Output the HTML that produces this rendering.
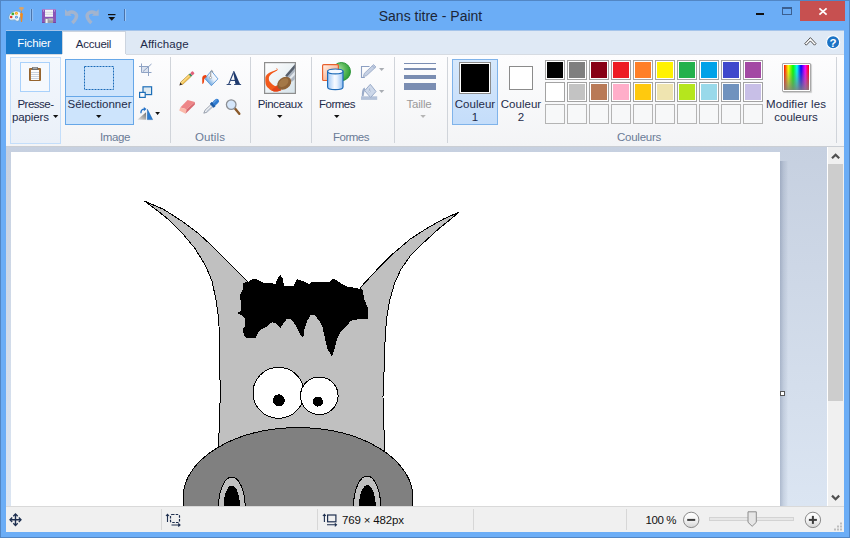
<!DOCTYPE html>
<html>
<head>
<meta charset="utf-8">
<title>Sans titre - Paint</title>
<style>
html,body{margin:0;padding:0;}
body{width:850px;height:538px;overflow:hidden;background:#6badf6;font-family:"Liberation Sans",sans-serif;font-size:12px;color:#1e2b4a;position:relative;}
.abs{position:absolute;}
#win{position:absolute;left:0;top:0;width:850px;height:538px;background:#6badf6;box-sizing:border-box;border:1px solid #5286c4;}
#title{position:absolute;left:330.5px;top:8px;width:200px;text-align:center;font-size:14px;line-height:16px;color:#1c2638;white-space:nowrap;}
#tabs{position:absolute;left:6px;top:31px;width:838px;height:23px;background:#dfe9f5;}
#ribbon{position:absolute;left:6px;top:54px;width:838px;height:92px;background:linear-gradient(#fdfdfe,#f3f4f6);border-bottom:1px solid #caced4;}
#work{position:absolute;left:6px;top:147px;width:821px;height:359px;background:linear-gradient(#c6d0e0,#dbe5f2);}
#status{position:absolute;left:6px;top:506px;width:838px;height:26px;background:#f0f0f0;border-top:1px solid #d9d9d9;box-sizing:border-box;}
.t{position:absolute;white-space:nowrap;text-align:center;line-height:13px;}
.sep{position:absolute;top:57px;width:1px;height:86px;background:#d0d4da;}
.gl{position:absolute;top:131px;color:#6a7b96;text-align:center;white-space:nowrap;line-height:13px;}
.r{font-size:11.5px;}
.sw{position:absolute;width:20px;height:20px;box-sizing:border-box;border:1px solid #a3a3a3;background:#fff;}
.sw i{position:absolute;left:1px;top:1px;width:16px;height:16px;display:block;}
.sw.e{background:#f7f8f9;border-color:#b4b4b4;}
</style>
</head>
<body>
<div id="win"></div>
<div id="title">Sans titre - Paint</div>
<div id="tabs"></div><div class="abs" style="left:6px;top:30px;width:838px;height:1px;background:#a5c4ea"></div>
<!-- title bar icons -->
<svg class="abs" style="left:8px;top:6px" width="120" height="20" viewBox="0 0 120 20">
  <!-- paint app icon -->
  <path d="M0.800 11.500 C0.800 7.500 4.500 4.900 8.300 4.900 C11.500 4.900 13.200 6.500 13.200 8.500 C13.200 10 12.300 10.500 11.800 11.500 C11 13 12 14.800 10 15.300 C8.200 15.700 8 14 6.500 13.900 C4.500 13.800 0.800 15.500 0.800 11.500 Z" fill="#eef4f9" stroke="#6b9fcb" stroke-width="0.900"/>
  <circle cx="4.800" cy="7.900" r="1.400" fill="#3aa935"/>
  <circle cx="8.400" cy="7.300" r="1.500" fill="#f2a31c"/><circle cx="8.400" cy="7.300" r="0.600" fill="#fbd66a"/>
  <circle cx="3.200" cy="11" r="1.300" fill="#e0392c"/>
  <circle cx="8.400" cy="11.200" r="1.400" fill="#4f8fd6"/><circle cx="8.400" cy="11.200" r="0.600" fill="#b7d4f2"/>
  <path d="M12.100 8.600 Q12.200 6.600 13.500 6.400 Q14.800 6.600 14.900 8.600 L14 15.900 L13 15.900 Z" fill="#f28a1c"/>
  <path d="M13.500 4.400 L13.500 6.800" stroke="#9c8f86" stroke-width="0.900"/><path d="M11 2 Q11.200 1.100 13.500 1.100 Q15.800 1.100 16 2 Q15.800 3.200 14.300 3.700 L13.800 4.900 L13.200 4.900 L12.700 3.700 Q11.200 3.200 11 2 Z" fill="#e0a462"/>
  <!-- separator -->
  <rect x="22.400" y="3" width="0.800" height="12" fill="#a9cdf8" opacity="0.700"/>
  <rect x="23.200" y="3" width="1" height="12" fill="#3a5a8a" opacity="0.850"/>
  <rect x="24.200" y="3" width="0.900" height="12" fill="#a9cdf8" opacity="0.800"/>
  <!-- save icon -->
  <rect x="34" y="3" width="14" height="14" fill="#8a55b8"/>
  <rect x="34" y="3" width="14" height="1" fill="#a77bd0"/>
  <rect x="34" y="16" width="14" height="1" fill="#7445a3"/>
  <rect x="37" y="3.800" width="8" height="7" fill="#f6f6f8"/>
  <rect x="37" y="5.800" width="8" height="1" fill="#d5d7de"/>
  <rect x="37" y="7.800" width="8" height="1" fill="#d5d7de"/>
  <rect x="36.800" y="12.400" width="8.300" height="4.600" fill="#9a9aa2"/>
  <rect x="37.700" y="13" width="1.900" height="4" fill="#efeff2"/>
  <rect x="40.500" y="12.400" width="4.600" height="2" fill="#b9b9c0"/>
  <rect x="35" y="4.400" width="1" height="1" fill="#d8c4ea"/><rect x="46" y="4.400" width="1" height="1" fill="#d8c4ea"/>
  <!-- undo -->
  <path d="M57 3.200 L57 9.800 L63.800 9.800 Z" fill="#a3b4ce"/>
  <path d="M60.300 7 C65 4.300 70.200 7.600 68 12.200 C67.200 13.900 66 15.300 64.300 16.900" fill="none" stroke="#a3b4ce" stroke-width="3.400"/>
  <!-- redo -->
  <path d="M90.700 3.200 L90.700 9.800 L83.900 9.800 Z" fill="#a3b4ce"/>
  <path d="M87.400 7 C82.700 4.300 77.500 7.600 79.700 12.200 C80.500 13.900 81.700 15.300 83.400 16.900" fill="none" stroke="#a3b4ce" stroke-width="3.400"/>
  <!-- customize arrow -->
  <rect x="100" y="8" width="7.500" height="1.200" fill="#111"/>
  <path d="M100.300 11 L107.200 11 L103.750 14.800 Z" fill="#111"/>
  <!-- separator -->
  <rect x="116" y="3" width="1" height="12" fill="#3f5f8f" opacity="0.75"/>
  <rect x="117" y="3" width="1" height="12" fill="#a9cdf8" opacity="0.8"/>
</svg>
<!-- window buttons -->
<div class="abs" style="left:756px;top:13px;width:8px;height:2px;background:#111"></div>
<div class="abs" style="left:782px;top:7px;width:10px;height:8px;box-sizing:border-box;border:1px solid #3b5f90;border-top-width:2px;"></div>
<div class="abs" style="left:800px;top:1px;width:45px;height:20px;background:#c75050"></div>
<svg class="abs" style="left:817px;top:6px" width="12" height="11" viewBox="0 0 12 11"><path d="M2.400 2.300 L9.600 8.700 M9.600 2.300 L2.400 8.700" stroke="#fff" stroke-width="1.700" fill="none"/></svg>

<div class="abs" style="left:6px;top:31px;width:56px;height:23px;background:#1979ca"></div>
<div class="t r" style="left:6px;top:37px;width:56px;color:#fff;letter-spacing:-0.15px">Fichier</div>
<div class="abs" style="left:62px;top:31px;width:64px;height:24px;background:#fdfdfe;border:1px solid #ccd4df;border-bottom:none;box-sizing:border-box"></div>
<div class="t r" style="left:62px;top:38px;width:63px;color:#1e2b4a;letter-spacing:-0.25px">Accueil</div>
<div class="t r" style="left:133px;top:38px;width:63px;color:#1e2b4a;letter-spacing:0.1px">Affichage</div>
<svg class="abs" style="left:803px;top:35px" width="40" height="16" viewBox="0 0 40 16">
  <path d="M1.800 8.600 L7.400 2.600 L13 8.600 L11.500 10.200 L7.400 5.900 L3.300 10.200 Z" fill="#fff" stroke="#4f4f4f" stroke-width="1"/>
  <circle cx="30.100" cy="7.200" r="6.600" fill="#1b73c5" stroke="#fff" stroke-width="1.200"/>
  <text x="30.100" y="11.500" font-family="Liberation Sans" font-weight="bold" font-size="11.500" fill="#fff" text-anchor="middle">?</text>
</svg>

<div id="ribbon"></div><div class="abs" style="left:6px;top:54px;width:56px;height:1px;background:#d6dbe2"></div><div class="abs" style="left:126px;top:54px;width:718px;height:1px;background:#d6dbe2"></div>

<!-- group: presse-papiers -->
<div class="abs" style="left:10px;top:57px;width:51px;height:87px;box-sizing:border-box;border:1px solid #c4defa;background:linear-gradient(#f3f7fd,#eaf0f8)"></div>
<div class="abs" style="left:20px;top:62px;width:30px;height:30px;box-sizing:border-box;border:1px solid #a9d1fb;background:#f6f9fd"></div>
<!-- select button -->
<div class="abs" style="left:65px;top:59px;width:69px;height:66px;box-sizing:border-box;border:1px solid #66a7e8;background:#cde4fc"></div>
<div class="abs" style="left:66px;top:96px;width:67px;height:1px;background:#66a7e8"></div>
<!-- separators -->
<div class="sep" style="left:170px"></div><div class="sep" style="left:250px"></div><div class="sep" style="left:311px"></div><div class="sep" style="left:394px"></div><div class="sep" style="left:447px"></div><div class="sep" style="left:836px"></div>
<!-- couleur 1 active -->
<div class="abs" style="left:452px;top:59px;width:46px;height:66px;box-sizing:border-box;border:1px solid #7fb3ea;background:linear-gradient(#d6e8fc,#c4ddfa)"></div>
<div class="abs" style="left:459px;top:62px;width:32px;height:32px;box-sizing:border-box;border:1px solid #8b8b8b;background:#fff"><div style="position:absolute;left:1px;top:1px;width:28px;height:28px;background:#000"></div></div>
<div class="abs" style="left:509px;top:66px;width:24px;height:24px;box-sizing:border-box;border:1px solid #8b8b8b;background:#fff"></div>
<div class="sw" style="left:545px;top:60px"><i style="background:#000000"></i></div><div class="sw" style="left:567px;top:60px"><i style="background:#7f7f7f"></i></div><div class="sw" style="left:589px;top:60px"><i style="background:#880015"></i></div><div class="sw" style="left:611px;top:60px"><i style="background:#ed1c24"></i></div><div class="sw" style="left:633px;top:60px"><i style="background:#ff7f27"></i></div><div class="sw" style="left:655px;top:60px"><i style="background:#fff200"></i></div><div class="sw" style="left:677px;top:60px"><i style="background:#22b14c"></i></div><div class="sw" style="left:699px;top:60px"><i style="background:#00a2e8"></i></div><div class="sw" style="left:721px;top:60px"><i style="background:#3f48cc"></i></div><div class="sw" style="left:743px;top:60px"><i style="background:#a349a4"></i></div><div class="sw" style="left:545px;top:82px"><i style="background:#ffffff"></i></div><div class="sw" style="left:567px;top:82px"><i style="background:#c3c3c3"></i></div><div class="sw" style="left:589px;top:82px"><i style="background:#b97a57"></i></div><div class="sw" style="left:611px;top:82px"><i style="background:#ffaec9"></i></div><div class="sw" style="left:633px;top:82px"><i style="background:#ffc90e"></i></div><div class="sw" style="left:655px;top:82px"><i style="background:#efe4b0"></i></div><div class="sw" style="left:677px;top:82px"><i style="background:#b5e61d"></i></div><div class="sw" style="left:699px;top:82px"><i style="background:#99d9ea"></i></div><div class="sw" style="left:721px;top:82px"><i style="background:#7092be"></i></div><div class="sw" style="left:743px;top:82px"><i style="background:#c8bfe7"></i></div><div class="sw e" style="left:545px;top:104px"></div><div class="sw e" style="left:567px;top:104px"></div><div class="sw e" style="left:589px;top:104px"></div><div class="sw e" style="left:611px;top:104px"></div><div class="sw e" style="left:633px;top:104px"></div><div class="sw e" style="left:655px;top:104px"></div><div class="sw e" style="left:677px;top:104px"></div><div class="sw e" style="left:699px;top:104px"></div><div class="sw e" style="left:721px;top:104px"></div><div class="sw e" style="left:743px;top:104px"></div>
<!-- edit colors icon -->
<div class="abs" style="left:782px;top:63px;width:29px;height:29px;box-sizing:border-box;border:1px solid #a8a8a8;border-radius:1px;background:#fff;box-shadow:1px 1px 1px rgba(0,0,0,0.18)">
  <div style="position:absolute;left:1px;top:1px;width:25px;height:25px;background:linear-gradient(rgba(128,128,128,0),rgba(128,128,128,0.12) 25%,rgba(128,128,128,0.85)),linear-gradient(90deg,#ff0000,#ffff00 17%,#00ff00 36%,#00ffff 52%,#0000ff 68%,#ff00ff 85%,#ff0000)"></div>
</div>
<!-- ribbon text -->
<div class="t r" style="left:10px;top:98px;width:51px;letter-spacing:-0.5px">Presse-</div>
<div class="t r" style="left:5px;top:111px;width:51px;letter-spacing:-0.1px">papiers</div>
<div class="t r" style="left:65px;top:98px;width:69px">Sélectionner</div>
<div class="t r" style="left:252px;top:98px;width:56px;letter-spacing:-0.34px">Pinceaux</div>
<div class="t r" style="left:312px;top:98px;width:50px;letter-spacing:-0.47px">Formes</div>
<div class="t r" style="left:395px;top:98px;width:48px;color:#9a9a9a;letter-spacing:-0.17px">Taille</div>
<div class="t r" style="left:452px;top:98px;width:46px;letter-spacing:0.03px">Couleur</div>
<div class="t r" style="left:452px;top:111px;width:46px">1</div>
<div class="t r" style="left:498px;top:98px;width:46px;letter-spacing:0.03px">Couleur</div>
<div class="t r" style="left:498px;top:111px;width:46px">2</div>
<div class="t r" style="left:761px;top:98px;width:70px;letter-spacing:0.1px">Modifier les</div>
<div class="t r" style="left:761px;top:111px;width:70px">couleurs</div>
<div class="gl r" style="left:85px;width:60px;letter-spacing:-0.4px">Image</div>
<div class="gl r" style="left:180px;width:60px;letter-spacing:0.1px">Outils</div>
<div class="gl r" style="left:321px;width:60px;letter-spacing:-0.47px">Formes</div>
<div class="gl r" style="left:609px;width:60px;letter-spacing:-0.25px">Couleurs</div>
<!-- ribbon icons -->
<svg class="abs" style="left:6px;top:54px" width="838" height="92" viewBox="6 54 838 92">
  <defs>
    <linearGradient id="gcyl" x1="0" x2="1"><stop offset="0" stop-color="#9cc6f6"/><stop offset="0.450" stop-color="#f6faff"/><stop offset="0.600" stop-color="#eaf3fe"/><stop offset="1" stop-color="#8fbdf2"/></linearGradient>
    <linearGradient id="gor" x1="0" y1="0" x2="1" y2="1"><stop offset="0" stop-color="#fff3ec"/><stop offset="0.500" stop-color="#fac3a8"/><stop offset="1" stop-color="#f08a5c"/></linearGradient>
    <radialGradient id="ggr" cx="0.300" cy="0.400" r="0.750"><stop offset="0" stop-color="#b5e3b0"/><stop offset="0.550" stop-color="#5cba5c"/><stop offset="1" stop-color="#259a30"/></radialGradient>
    <linearGradient id="gbk" x1="0.850" y1="0.250" x2="0.250" y2="0.850"><stop offset="0" stop-color="#ffffff"/><stop offset="0.450" stop-color="#e6f0fb"/><stop offset="1" stop-color="#5c9cdc"/></linearGradient>
    <linearGradient id="gtri" x1="0" y1="1" x2="1" y2="0"><stop offset="0" stop-color="#e8e8e8"/><stop offset="1" stop-color="#707070"/></linearGradient>
    <linearGradient id="gbr" x1="0" y1="0" x2="1" y2="1"><stop offset="0" stop-color="#ffffff"/><stop offset="0.45" stop-color="#eef3f6"/><stop offset="1" stop-color="#d6e3ea"/></linearGradient>
  </defs>
  <!-- clipboard -->
  <rect x="29" y="68" width="12" height="13" rx="1" fill="#a9743a"/>
  <rect x="29.500" y="68.5" width="11" height="12" rx="1" fill="none" stroke="#8a5a24" stroke-width="1" opacity="0.6"/>
  <rect x="31" y="70" width="8" height="10" fill="#fdfdfd"/>
  <rect x="31" y="72" width="8" height="1" fill="#c9d3e0"/><rect x="31" y="74" width="8" height="1" fill="#c9d3e0"/><rect x="31" y="76" width="8" height="1" fill="#c9d3e0"/><rect x="31" y="78" width="8" height="1" fill="#c9d3e0"/>
  <rect x="32" y="67" width="6" height="3" rx="0.5" fill="#6f6f6f"/><rect x="33" y="67.600" width="4" height="1" fill="#c9c9c9"/>
  <path d="M53 115 L58.300 115 L55.650 118 Z" fill="#111"/>
  <!-- select dashed rect -->
  <rect x="84.500" y="66.5" width="29" height="23" fill="none" stroke="#1a6bb8" stroke-width="1" stroke-dasharray="2 1"/>
  <path d="M96 115 L101.500 115 L98.75 118 Z" fill="#111"/>
  <!-- crop (disabled) -->
  <rect x="142" y="67" width="6" height="5.500" fill="#d3dceb" opacity="0.8"/>
  <g stroke="#8fa3c4" stroke-width="1" fill="none"><path d="M141.500 63.500 L141.500 72.500 L151.500 72.500 M139 66.500 L148.500 66.500 L148.500 76"/><path d="M143 71.500 L151.500 64"/></g>
  <!-- resize -->
  <rect x="143" y="86.800" width="8.600" height="7.800" fill="#dfeaf1" stroke="#1e6fb8" stroke-width="1.200"/>
  <rect x="139.600" y="92.400" width="5.600" height="5" fill="#fafcfe" stroke="#1e6fb8" stroke-width="1.200"/>
  <!-- rotate -->
  <path d="M137.300 119.800 L146 119.800 L146 112.300 Z" fill="url(#gtri)"/>
  <path d="M147.400 109.300 L147.300 119.600 L152.600 119.600 Z" fill="#2a7bd0" stroke="#1b62ad" stroke-width="0.500"/>
  <path d="M140.900 113.200 C140.900 110.600 142.500 109.200 144.300 109.200" stroke="#2472c8" stroke-width="1.300" fill="none"/>
  <path d="M143.800 107 L146.500 109.100 L143.800 111.200 Z" fill="#2472c8"/>
  <path d="M155.200 112 L160 112 L157.600 115 Z" fill="#111"/>
  <!-- pencil -->
  <g transform="translate(179.300 85.500) rotate(-43)">
    <path d="M0 0 L3 -1.500 L3 1.500 Z" fill="#3a2a1a"/>
    <rect x="3" y="-1.500" width="11.500" height="3" fill="#f4c453" stroke="#b07f22" stroke-width="0.500"/>
    <rect x="3" y="-0.900" width="11.500" height="0.900" fill="#fbe29a"/>
    <rect x="14.500" y="-1.600" width="1.800" height="3.200" fill="#3a8f5f"/>
    <rect x="16.300" y="-1.600" width="3.200" height="3.200" rx="0.800" fill="#e2607a"/>
  </g>
  <!-- bucket -->
  <path d="M211.400 70.900 L217.900 78.900 L211.400 85.700 L204.800 78.500 Z" fill="url(#gbk)" stroke="#5a96d6" stroke-width="0.900"/>
  <path d="M206.200 74.900 C204 74.700 202.300 76 202.200 78 L202.300 83.900 C203.200 83.800 203.900 83 204 81.500 L204.200 79.600 C204.500 78.200 205.300 77.600 206.600 77.300 Z" fill="#ee4310"/>
  <path d="M210.600 77 L210.900 71 Q211.700 69.600 212.600 71 L212.700 72.500" stroke="#8f8f8f" stroke-width="0.900" fill="none"/><circle cx="210.500" cy="77.600" r="1.100" fill="#fff" stroke="#8a8a8a" stroke-width="0.600"/>
  <!-- A -->
  <g fill="#1f3a6e"><path d="M233 71.200 L234.300 71.200 L240.100 84.200 L235.500 84.200 Z"/><path d="M232.900 72.600 L233.700 73.600 L229.200 84.200 L228.100 84.200 Z"/><rect x="230.600" y="79.900" width="5.400" height="1"/><rect x="226.600" y="84" width="4.500" height="0.900"/><rect x="234.100" y="84" width="7" height="0.900"/></g>
  <!-- eraser -->
  <path d="M187.600 100 L194.900 102 L186.700 109.300 L180.300 107.500 Z" fill="#ee8688"/>
  <path d="M180.300 107.500 L186.700 109.300 L185.500 113.700 L179.200 110.600 Z" fill="#fbb9aa"/>
  <path d="M186.700 109.300 L194.900 102 L194.900 104.400 L185.500 113.700 Z" fill="#d9686f"/>
  <!-- dropper -->
  <g transform="translate(203.800 113.200) rotate(-43)">
    <path d="M0 0 L3 -1.400 L12 -1.400 L12 1.400 L3 1.400 Z" fill="#f1f3f6" stroke="#7d8797" stroke-width="0.700"/>
    <path d="M3 0.300 L12 0.300 L12 1.400 L3 1.400 Z" fill="#b9c2d0"/>
    <rect x="10.800" y="-2.800" width="3" height="5.600" rx="0.500" fill="#1d5ca6"/>
    <rect x="13" y="-2.300" width="7" height="4.600" rx="2.300" fill="#2f7bd0"/>
    <rect x="14" y="-1.700" width="5" height="1.300" rx="0.600" fill="#5d9be0"/>
  </g>
  <!-- magnifier -->
  <path d="M235 108.500 L239.300 113.800" stroke="#8b5a2b" stroke-width="2.400" stroke-linecap="round"/>
  <circle cx="231.200" cy="104.600" r="4.800" fill="#d5e6fa" stroke="#8c8f94" stroke-width="1.300"/>
  <!-- brushes -->
  <rect x="264.600" y="62.600" width="30.800" height="30.800" fill="url(#gbr)" stroke="#8e8e8e" stroke-width="1.200"/>
  <clipPath id="cpb"><rect x="265.200" y="63.200" width="29.600" height="29.600"/></clipPath>
  <g clip-path="url(#cpb)">
    <path d="M276 68.300 C277.500 68.300 278 69.500 277.500 69.900 C276.800 69.500 275.500 70.300 274.900 70.600 C272 71.500 269.500 72.500 268.200 73.600 C266 75.500 265 77 265.200 78.800 C265.100 81 265.300 82.500 265.600 84 C266.300 86 267.500 87.500 268.900 88.500 C270 89.800 271.300 90.600 272.600 91.100 C274 91.600 275.600 91.700 277.100 91.500 C278.600 91.300 280 91 281.200 90.300 L278.500 84.800 C277.500 85.800 276 86.100 274.900 85.900 C273.400 85.300 272.100 84.400 271.200 83.300 C270 82.200 269 81 268.900 79.600 C268.700 78.200 269 76.800 269.700 75.800 C270.600 74.500 272 73.400 273.400 72.500 C275 71.600 277 70.800 277.500 69.900 Z" fill="#f25a1c"/>
    <path d="M272.600 91.100 C274 91.600 275.600 91.700 277.100 91.500 C278.600 91.300 280 91 281.200 90.300 L278.500 84.800 C276.800 86.500 274 88 272 89.500 Z" fill="#e2441a"/>
    <path d="M285.300 75.500 L297 62 L300 74 L292 81.800 Z" fill="#aab3bf"/>
    <path d="M285.300 75.500 L297 62 L298 64.500 L287 77 Z" fill="#565f6c"/>
    <path d="M288.500 78.500 L298.500 67.500 L299.500 70 L290 80 Z" fill="#e3e8ee"/>
    <ellipse cx="284.200" cy="83.300" rx="7.600" ry="5.800" transform="rotate(-38 284.200 83.300)" fill="#8e6236"/>
    <ellipse cx="283.600" cy="82.600" rx="5.500" ry="3.600" transform="rotate(-38 283.600 82.600)" fill="#a47846"/>
  </g>
  <path d="M277 115 L282.500 115 L279.750 118 Z" fill="#111"/>
  <!-- shapes -->
  <circle cx="341.400" cy="71.600" r="9.100" fill="url(#ggr)" stroke="#1e8f2a" stroke-width="0.900"/>
  <rect x="322.600" y="64.700" width="15.800" height="15.800" rx="1" fill="url(#gor)" stroke="#e8602c" stroke-width="1.200"/>
  <path d="M327.600 71.400 L327.600 86.900 A7.700 2.700 0 0 0 343 86.900 L343 71.400 Z" fill="url(#gcyl)" stroke="#1e6bb8" stroke-width="1.200"/>
  <ellipse cx="335.300" cy="71.400" rx="7.700" ry="2.400" fill="#f4f9ff" stroke="#1e6bb8" stroke-width="1.200"/>
  <path d="M334 115 L339.500 115 L336.750 118 Z" fill="#111"/>
  <!-- outline (disabled) -->
  <path d="M369.500 66.500 L361.500 66.500 L361.500 77.500 L364.800 77.500" stroke="#8c9fc2" stroke-width="1.100" fill="none"/>
  <path d="M363.300 76.600 L364.300 73.400 L373.600 64.600 L375.900 67 L366.500 75.700 Z" fill="#c5d0e4" stroke="#93a5c4" stroke-width="0.800"/>
  <path d="M372.300 65.800 L374.700 68.200" stroke="#93a5c4" stroke-width="0.800"/>
  <path d="M379 68 L384.300 68 L381.650 70.900 Z" fill="#a9adb3"/>
  <!-- fill (disabled) -->
  <rect x="361" y="96.300" width="16.200" height="3.600" fill="#b4c2d9"/>
  <path d="M370.300 84.300 L376 91.500 L370.600 97.500 L364.700 90.700 Z" fill="#cdd8ea" stroke="#9bacc9" stroke-width="1"/>
  <path d="M364.600 87.600 C362.500 88.500 361.800 91 361.900 96.300 L363.600 96.300 L364.300 92 L365.300 89.800 Z" fill="#9bacc9"/>
  <path d="M369.600 88.500 L369.600 91" stroke="#9bacc9" stroke-width="0.800"/><circle cx="369.600" cy="91.300" r="0.900" fill="#eef2f8" stroke="#9bacc9" stroke-width="0.500"/>
  <path d="M379 90.100 L384.300 90.100 L381.650 93 Z" fill="#a9adb3"/>
  <!-- size -->
  <rect x="404" y="63" width="32" height="1" fill="#7a8db2"/><rect x="404" y="68" width="32" height="2" fill="#7a8db2"/><rect x="404" y="75" width="32" height="4" fill="#7a8db2"/><rect x="404" y="83" width="32" height="7" fill="#7a8db2"/>
  <path d="M420.300 115 L425.800 115 L423.050 118 Z" fill="#b5b5b5"/>
</svg>
<div id="work"></div>
<div id="status"></div>
<!-- canvas shadow -->
<div class="abs" style="left:780px;top:161px;width:8px;height:345px;background:linear-gradient(90deg,rgba(40,60,100,0.250),rgba(40,60,100,0.110) 45%,rgba(40,60,100,0.040) 85%,rgba(40,60,100,0))"></div>
<!-- canvas -->
<div id="canvas" class="abs" style="left:11px;top:152px;width:769px;height:354px;background:#fff;overflow:hidden">
<svg class="abs" style="left:0;top:0" width="769" height="354" viewBox="11 152 769 354" shape-rendering="crispEdges">
  <path d="M144.5 201 L163.8 209.5 L182 221.2 L197.7 232.9 L210.7 244.6 L226.3 260.3 L239.3 273.3 L247.5 281.5 L250 300 L358 300 L360.5 287.5 L376.4 270.3 L392 254.6 L410.3 239 L428.5 227.3 L444.1 218.7 L459.2 212 L451.9 218.2 L438.9 228.6 L423.3 242.9 L410.3 255.9 L401.1 269 L394.6 283.3 L389.4 301.5 L386.8 317.1 L385.2 335 L384.5 360 L383 397 L384 430 L384.9 452 L385 470 L218 470 L218.5 447 L219.5 420 L220.2 397 L219.8 360 L219.5 335 L218.5 317.5 L215.9 299.3 L212 281.1 L205.5 265.5 L195 248.5 L182 232.9 L169 219.9 L156 209.5 Z" fill="#c0c0c0" stroke="#000" stroke-width="1"/>
  <path d="M247.7 282.1 L252.3 279.1 L257 279.5 L264.4 283.2 L275.5 283.6 L278.7 276.5 L280.6 275.2 L282.6 278.4 L284.3 286.4 L293.2 286.4 L297.3 279.1 L303.4 281.4 L309.6 284 L311.8 281.7 L330.4 281.7 L331.9 278.9 L335 279.5 L346.2 286.4 L360.1 288.8 L362.9 290.1 L364.2 299.4 L367.9 307.8 L367.9 318.5 L358.3 319.3 L350.8 320.8 L346.2 326.3 L340.6 331.9 L336.9 339.4 L334.1 350.5 L331.9 356.1 L327.6 349.6 L324.8 337.5 L322.6 327.3 L319.2 320.8 L314.6 314.8 L310.9 314.8 L307.2 320.8 L304.4 329.1 L303.4 337.5 L300.6 334.7 L295.1 324.5 L290.4 318.5 L286.7 318.9 L280.6 327.7 L275.5 323 L271.8 322.3 L267.2 326.3 L261.6 329.1 L257.9 332.9 L256 337.5 L246.7 337.9 L243.9 335.6 L243 329.1 L245.2 325.4 L245.2 318 L241.2 315.2 L237.4 313 L241.2 310.5 L240.2 294.7 L243 289.2 L243.4 282.7 Z" fill="#000"/>
  <ellipse cx="298" cy="497.7" rx="115" ry="70" fill="#808080" stroke="#000" stroke-width="1"/>
  <circle cx="278.500" cy="392.8" r="25.5" fill="#fff" stroke="#000" stroke-width="1"/>
  <circle cx="319.3" cy="395.8" r="18.8" fill="#fff" stroke="#000" stroke-width="1"/>
  <circle cx="278.8" cy="400.3" r="6" fill="#000"/>
  <circle cx="317.9" cy="401.6" r="5" fill="#000"/>
  <ellipse cx="231.8" cy="508" rx="13.4" ry="31" fill="#c0c0c0" stroke="#000" stroke-width="1"/>
  <ellipse cx="231.8" cy="508" rx="8.3" ry="22.500" fill="#000"/>
  <ellipse cx="367.100" cy="508" rx="13.7" ry="32" fill="#c0c0c0" stroke="#000" stroke-width="1"/>
  <ellipse cx="367.3" cy="508" rx="8.5" ry="23" fill="#000"/>
</svg>
</div>
<!-- resize handle -->
<div class="abs" style="left:780px;top:391px;width:5px;height:5px;box-sizing:border-box;border:1px solid #555;background:#fff"></div>
<!-- scrollbar -->
<div class="abs" style="left:827px;top:147px;width:17px;height:359px;background:#f0f0f0;border-left:1px solid #fff;box-sizing:border-box"></div>
<div class="abs" style="left:828px;top:164px;width:15px;height:237px;background:#cdcdcd"></div>
<svg class="abs" style="left:827px;top:147px" width="17" height="360" viewBox="0 0 17 360">
  <path d="M5 11.300 L8.600 7.700 L12.200 11.300" stroke="#505050" stroke-width="2.200" fill="none"/>
  <path d="M5 348.600 L8.600 352.200 L12.200 348.600" stroke="#505050" stroke-width="2.200" fill="none"/>
</svg>

<div class="abs" style="left:161px;top:509px;width:1px;height:21px;background:#d7d7d7"></div>
<div class="abs" style="left:317px;top:509px;width:1px;height:21px;background:#d7d7d7"></div>
<div class="abs" style="left:473px;top:509px;width:1px;height:21px;background:#d7d7d7"></div>
<div class="abs" style="left:626px;top:509px;width:1px;height:21px;background:#d7d7d7"></div>
<svg class="abs" style="left:6px;top:508px" width="838" height="24" viewBox="6 508 838 24">
  <defs><linearGradient id="gzb" x1="0" y1="0" x2="0" y2="1"><stop offset="0" stop-color="#ffffff"/><stop offset="0.5" stop-color="#f4f4f4"/><stop offset="1" stop-color="#d4d4d4"/></linearGradient></defs>
  <!-- move cross -->
  <path d="M15.500 514.500 L15.500 525 M10.500 519.750 L20.500 519.750" stroke="#1e2f4f" stroke-width="1.400" fill="none"/>
  <path d="M13.300 516.200 L15.500 514 L17.700 516.200 M13.300 523.300 L15.500 525.500 L17.700 523.300 M12.200 517.550 L10 519.750 L12.200 521.950 M18.800 517.550 L21 519.750 L18.800 521.950" stroke="#1e2f4f" stroke-width="1.300" fill="none"/>
  <!-- selection size icon -->
  <rect x="170.500" y="514.500" width="9" height="8" rx="1.500" fill="none" stroke="#1e2f4f" stroke-width="1.200" stroke-dasharray="2.500 1.200"/>
  <path d="M167.500 514.500 L167.500 522 M166 516 L167.500 514.300 L169 516 M171.500 525 L180 525 M178.300 523.500 L180 525 L178.300 526.500" stroke="#1e2f4f" stroke-width="1.100" fill="none"/>
  <!-- image size icon -->
  <rect x="327.600" y="515" width="8.300" height="6.800" fill="none" stroke="#1e2f4f" stroke-width="1.200"/>
  <path d="M324.400 514.500 L324.400 522 M322.900 516 L324.400 514.300 L325.900 516 M327 524.800 L336.500 524.800 M334.800 523.300 L336.500 524.800 L334.800 526.300" stroke="#1e2f4f" stroke-width="1.100" fill="none"/>
  <!-- zoom out -->
  <circle cx="691.200" cy="519.900" r="7.700" fill="url(#gzb)" stroke="#8a8a8a" stroke-width="1"/>
  <rect x="687.200" y="518.900" width="8" height="2" fill="#3c3c3c"/>
  <!-- slider -->
  <rect x="709.500" y="517.500" width="84" height="3" fill="#e7e7e7" stroke="#d3d3d3" stroke-width="1"/>
  <path d="M748 511.800 L756.300 511.800 L756.300 522.300 L752.150 526.300 L748 522.300 Z" fill="#e6e6e6" stroke="#8c8c8c" stroke-width="1"/>
  <!-- zoom in -->
  <circle cx="812.900" cy="519.900" r="7.700" fill="url(#gzb)" stroke="#8a8a8a" stroke-width="1"/>
  <rect x="808.900" y="518.900" width="8" height="2" fill="#3c3c3c"/>
  <rect x="811.900" y="515.900" width="2" height="8" fill="#3c3c3c"/>
  <!-- grip -->
  <g fill="#bdbdbd"><rect x="840" y="522.500" width="2" height="2"/><rect x="837" y="525.500" width="2" height="2"/><rect x="840" y="525.500" width="2" height="2"/><rect x="834" y="528.500" width="2" height="2"/><rect x="837" y="528.500" width="2" height="2"/><rect x="840" y="528.500" width="2" height="2"/></g>
</svg>
<div class="t r" style="left:342px;top:514px;text-align:left;color:#111;letter-spacing:-0.17px">769 × 482px</div>
<div class="t r" style="left:645.500px;top:514px;text-align:left;color:#111;letter-spacing:-0.4px">100 %</div>

</body>
</html>
